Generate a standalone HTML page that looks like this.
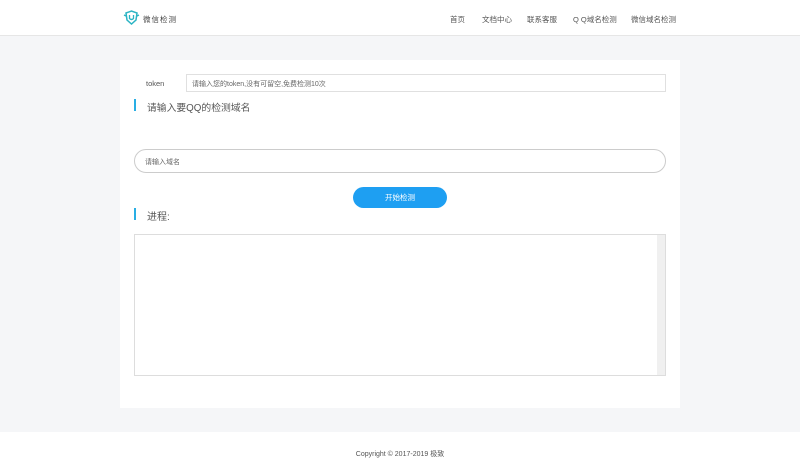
<!DOCTYPE html>
<html><head><meta charset="utf-8"><style>
*{margin:0;padding:0;box-sizing:border-box}
body{width:800px;height:469px;background:#f5f6f8;font-family:"Liberation Sans","Noto Sans CJK SC",sans-serif;position:relative;overflow:hidden;color:#555}
.hdr{position:absolute;left:0;top:0;width:800px;height:36px;background:#fff;border-bottom:1px solid #e6e6e6}
.logo{position:absolute;left:123px;top:10px}
.lt{position:absolute;left:143px;top:14px;font-size:7.5px;color:#444;letter-spacing:1px}
.nav{position:absolute;top:14px;font-size:7.5px;color:#555}
.main{position:absolute;left:120px;top:60px;width:560px;height:348px;background:#fff}
.a{position:absolute}
.bar{position:absolute;width:2px;height:12px;background:#29aee4}
.foot{position:absolute;left:0;top:432px;width:800px;height:37px;background:#fff;text-align:center;font-size:7px;color:#555;padding-top:17px}
</style></head><body>
<div class="hdr">
<svg class="logo" width="17" height="16" viewBox="0 0 17 16"><path d="M3 3 L8.5 1 L14 3 L13 10 L8.5 14 L4 10 Z" fill="none" stroke="#2bb4c4" stroke-width="1.5"/><path d="M6.5 5 V8.5 Q8.5 10.5 10.5 8.5 V5" fill="none" stroke="#2bb4c4" stroke-width="1.3"/><path d="M1 5 L3 6 M16 5 L14 6" stroke="#2bb4c4" stroke-width="1.3"/></svg>
<div class="lt">微信检测</div>
<div class="nav" style="left:450px">首页</div>
<div class="nav" style="left:482px">文档中心</div>
<div class="nav" style="left:527px">联系客服</div>
<div class="nav" style="left:573px">Q Q域名检测</div>
<div class="nav" style="left:631px">微信域名检测</div>
</div>
<div class="main">
<div class="a" style="left:26px;top:19px;font-size:7.5px">token</div>
<div class="a" style="left:66px;top:14px;width:480px;height:18px;border:1px solid #e0e0e0;font-size:7px;color:#666;padding:4px 5px">请输入您的token,没有可留空,免费检测10次</div>
<div class="bar" style="left:14px;top:39px"></div>
<div class="a" style="left:27px;top:40px;font-size:9.8px;color:#555">请输入要QQ的检测域名</div>
<div class="a" style="left:14px;top:89px;width:532px;height:24px;border:1px solid #ccc;border-radius:12px;font-size:7px;color:#666;padding:7px 10px">请输入域名</div>
<div class="a" style="left:233px;top:127px;width:94px;height:21px;background:#1e9ff2;border-radius:11px;color:#fff;font-size:7.5px;text-align:center;line-height:21px">开始检测</div>
<div class="bar" style="left:14px;top:148px"></div>
<div class="a" style="left:27px;top:148px;font-size:10px;color:#555">进程:</div>
<div class="a" style="left:14px;top:174px;width:532px;height:142px;border:1px solid #ddd"><div class="a" style="right:0;top:0;width:8px;height:140px;background:#f0f0f0"></div></div>
</div>
<div class="foot">Copyright © 2017-2019 极致</div>
</body></html>
